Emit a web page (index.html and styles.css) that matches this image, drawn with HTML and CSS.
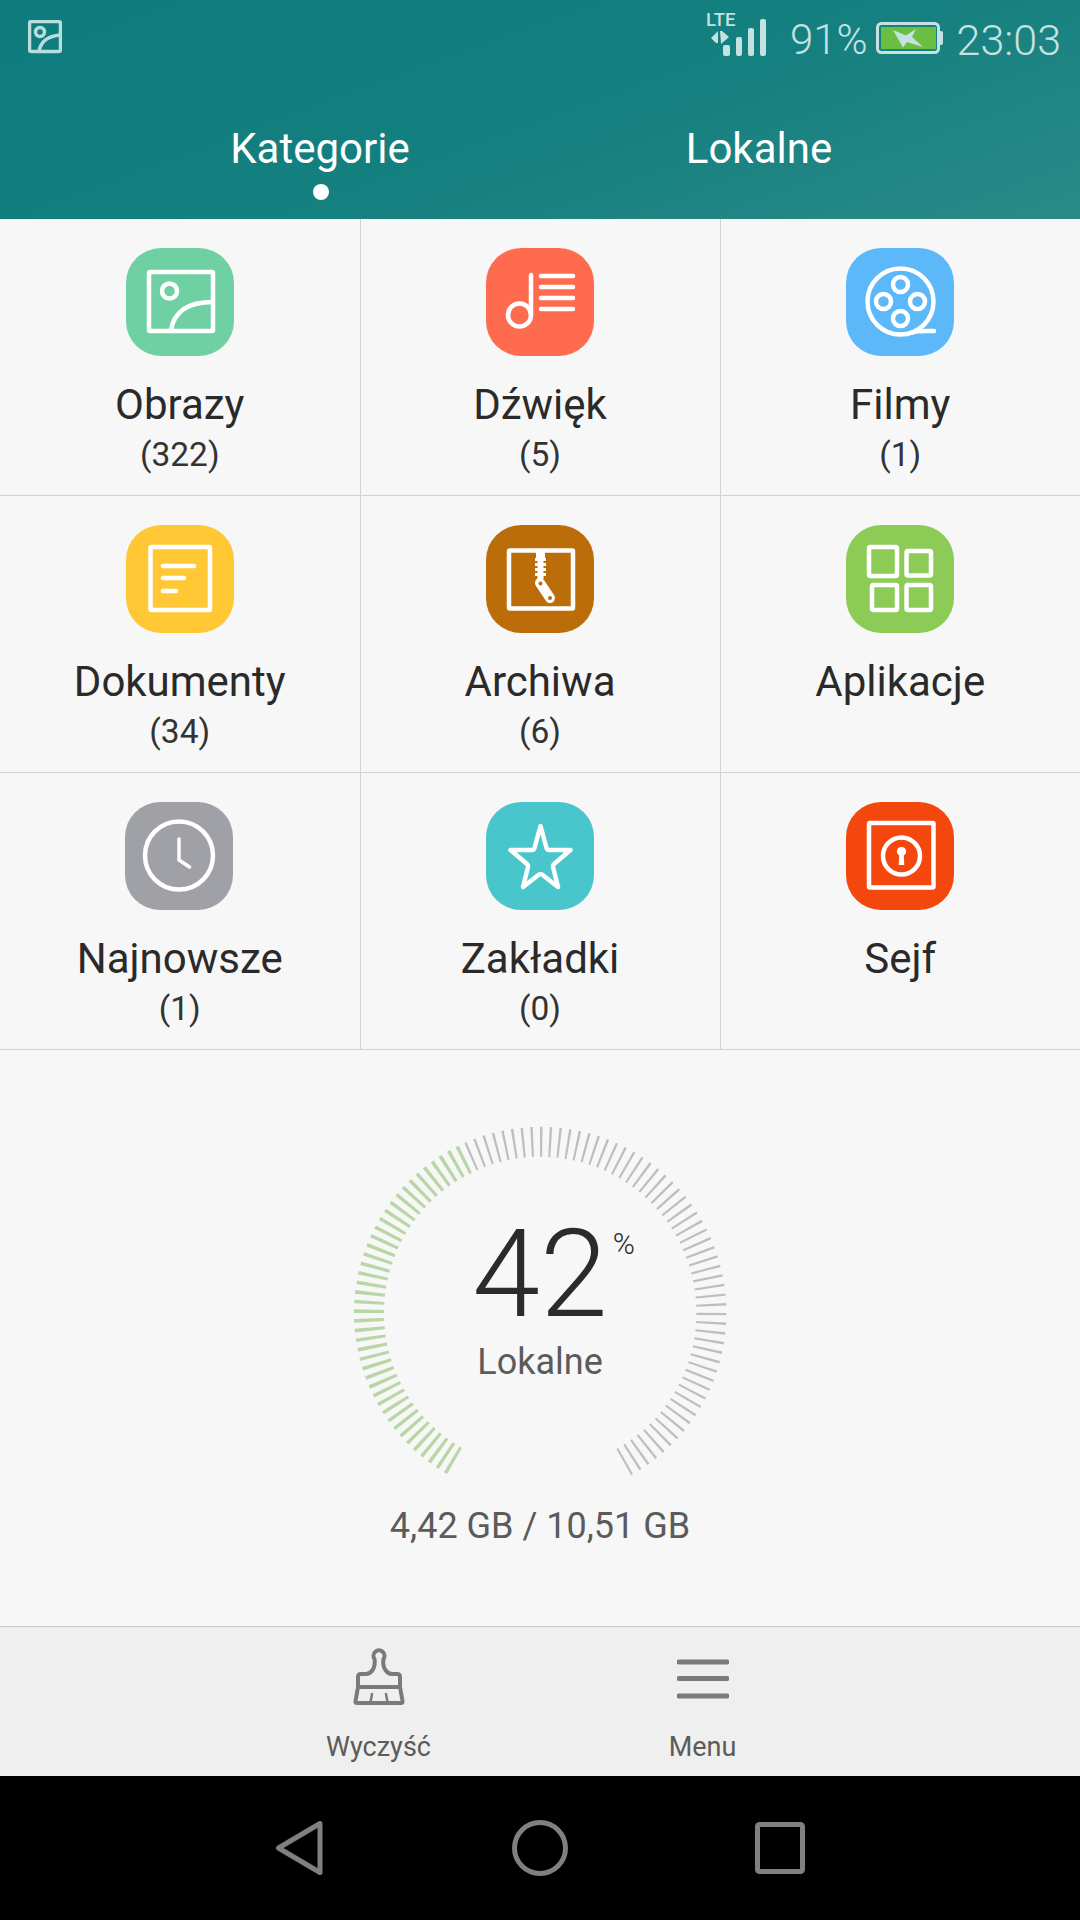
FILE: index.html
```html
<!DOCTYPE html>
<html lang="pl">
<head>
  <meta charset="UTF-8" />
  <meta name="viewport" content="width=device-width, initial-scale=1.0"/>
  <title>Pliki</title>
  <link rel="stylesheet" href="styles.css">
</head>
<body>

  <header class="top">
    <div class="status">
      <svg class="status-pic" width="34" height="34" viewBox="0 0 34 34">
        <rect x="1.5" y="1.5" width="31" height="30" rx="2"/>
        <circle cx="12" cy="12" r="4.5"/>
        <path d="M11 31 C13 21 20 16 32 15"/>
      </svg>
      <div class="status-right">
        <div class="net">
          <span class="lte">LTE</span>
          <svg width="60" height="44" viewBox="0 0 60 44">
            <path class="arrows" d="M5 26 L12 19 V31 H10 Z M14 19 H16 L23 25 L15 32 Z"/>
            <rect x="17" y="33" width="7" height="11" rx="2"/>
            <rect x="30" y="25" width="6" height="19" rx="2"/>
            <rect x="42" y="16" width="6" height="28" rx="2"/>
            <rect x="54" y="7" width="6" height="37" rx="2"/>
          </svg>
        </div>
        <span class="pct">91%</span>
        <svg class="batt" width="67" height="32" viewBox="0 0 67 32">
          <rect class="batt-fill" x="5" y="5" width="55" height="22"/>
          <rect class="batt-box" x="1.5" y="1.5" width="61" height="29" rx="4"/>
          <path class="batt-nub" d="M63 9 h2 a2 2 0 0 1 2 2 v10 a2 2 0 0 1 -2 2 h-2 Z"/>
          <path class="batt-bolt" d="M17 8 L30 13.5 L40 7 L36 15 L47 25 L31 20 L27 25.5 Z"/>
        </svg>
        <span class="clock">23:03</span>
      </div>
    </div>
    <nav class="tabs">
      <div class="tab on">Kategorie</div>
      <div class="tab">Lokalne</div>
    </nav>
  </header>

  <section class="grid">
    <div class="cell">
      <div class="tile c-images">
        <svg viewBox="0 0 108 108">
          <rect x="23" y="24" width="64" height="59" rx="1"/>
          <circle cx="43.5" cy="43" r="7.5"/>
          <path d="M45 82 C48 64 62 54 87 54"/>
        </svg>
      </div>
      <div class="name">Obrazy</div>
      <div class="count">(322)</div>
    </div>
    <div class="cell">
      <div class="tile c-audio">
        <svg viewBox="0 0 108 108">
          <circle cx="33.5" cy="67" r="11.5"/>
          <path d="M45 67 V27 M55 28 H87 M55 39 H87 M55 50 H87 M55 61 H87"/>
        </svg>
      </div>
      <div class="name">Dźwięk</div>
      <div class="count">(5)</div>
    </div>
    <div class="cell">
      <div class="tile c-video">
        <svg viewBox="0 0 108 108">
          <circle cx="54.5" cy="53.5" r="33"/>
          <circle cx="54.5" cy="36.5" r="7.5"/>
          <circle cx="54.5" cy="70.5" r="7.5"/>
          <circle cx="37.5" cy="53.5" r="7.5"/>
          <circle cx="71.5" cy="53.5" r="7.5"/>
          <path d="M66 84.5 C72 82.5 78 83 88 83"/>
        </svg>
      </div>
      <div class="name">Filmy</div>
      <div class="count">(1)</div>
    </div>

    <div class="cell">
      <div class="tile c-docs">
        <svg viewBox="0 0 108 108">
          <rect x="24.5" y="22" width="59.5" height="63" rx="1"/>
          <path d="M37 41 H68 M37 53 H58 M37 66 H50"/>
        </svg>
      </div>
      <div class="name">Dokumenty</div>
      <div class="count">(34)</div>
    </div>
    <div class="cell">
      <div class="tile c-zip">
        <svg viewBox="0 0 108 108">
          <rect x="23" y="25.5" width="64" height="58" rx="1"/>
          <path class="solid" d="M50 25 H59 V33 H60 V36 H57.5 V38 H60 V41 H57.5 V43 H60 V46 H57.5 V48 H60 V51 H57.5 V54 H51.5 V51 H49 V48 H51.5 V46 H49 V43 H51.5 V41 H49 V38 H51.5 V36 H49 V33 H50 Z"/>
          <path class="puller" d="M54 58 L64 73"/>
          <circle class="hole" cx="54.5" cy="58.5" r="2"/>
          <circle class="hole" cx="64" cy="73" r="2"/>
        </svg>
      </div>
      <div class="name">Archiwa</div>
      <div class="count">(6)</div>
    </div>
    <div class="cell">
      <div class="tile c-apps">
        <svg viewBox="0 0 108 108">
          <rect x="23" y="22" width="28" height="29" rx="1.5"/>
          <rect x="60.5" y="26" width="24.5" height="24.5" rx="1.5"/>
          <rect x="26" y="60" width="25" height="25" rx="1.5"/>
          <rect x="60.5" y="60" width="24.5" height="25" rx="1.5"/>
        </svg>
      </div>
      <div class="name">Aplikacje</div>
    </div>

    <div class="cell">
      <div class="tile c-recent">
        <svg viewBox="0 0 108 108">
          <circle cx="54" cy="53.5" r="34"/>
          <path class="thin" d="M54 37 V58 L64.5 65"/>
        </svg>
      </div>
      <div class="name">Najnowsze</div>
      <div class="count">(1)</div>
    </div>
    <div class="cell">
      <div class="tile c-star">
        <svg viewBox="0 0 108 108">
          <path d="M54.5 24 L60.5 46 Q61 48 63 48 H84.5 L68 62 Q66.5 63.5 67 65 L72 85 L56 72.5 Q54.5 71.5 53 72.5 L37 85 L42 65 Q42.5 63.5 41 62 L24.5 48 H46 Q48 48 48.5 46 Z"/>
        </svg>
      </div>
      <div class="name">Zakładki</div>
      <div class="count">(0)</div>
    </div>
    <div class="cell">
      <div class="tile c-safe">
        <svg viewBox="0 0 108 108">
          <rect x="23" y="21" width="64.5" height="64.5" rx="1"/>
          <circle cx="55.5" cy="54" r="18.5"/>
          <path class="solid" d="M55.5 45 A4.5 4.5 0 0 1 57.8 53.4 L58.3 63 H52.7 L53.2 53.4 A4.5 4.5 0 0 1 55.5 45 Z"/>
        </svg>
      </div>
      <div class="name">Sejf</div>
    </div>
  </section>

  <section class="storage">
    <div class="gauge">
      <svg class="ticks" width="380" height="380" viewBox="0 0 380 380">
        <path class="used" pathLength="124.7" d="M104.5 338.09 A171 171 0 0 1 116.92 35.4"/>
        <path class="free" pathLength="174.7" d="M120.45 33.78 A171 171 0 0 1 273.8 339.1"/>
      </svg>
      <div class="gauge-text">
        <div class="big">42<span class="sign">%</span></div>
        <div class="where">Lokalne</div>
      </div>
    </div>
    <div class="size">4,42 GB / 10,51 GB</div>
  </section>

  <footer class="tools">
    <div class="tool">
      <svg width="52" height="60" viewBox="0 0 52 60">
        <path d="M5 40 V30 Q5 27 8 27 H13 C18 27 23 21 21.5 12 A5.5 5.5 0 1 1 30.5 12 C29 21 34 27 39 27 H44 Q47 27 47 30 V40"/>
        <path d="M5 40 H47 L49.5 54 Q50 56 48 56 H4 Q2 56 2.5 54 Z"/>
        <path class="notch" d="M17.5 55 L19 47 M34.5 55 L33 47"/>
      </svg>
      <span>Wyczyść</span>
    </div>
    <div class="tool">
      <svg width="52" height="60" viewBox="0 0 52 60">
        <path d="M2 15 H50 M2 31.5 H50 M2 49 H50"/>
      </svg>
      <span>Menu</span>
    </div>
  </footer>

  <div class="sysnav">
    <svg width="50" height="56" viewBox="0 0 50 56">
      <path d="M3.5 28 L45 3.5 V52.5 Z"/>
    </svg>
    <svg width="56" height="56" viewBox="0 0 56 56">
      <circle cx="28" cy="28" r="25.5"/>
    </svg>
    <svg width="50" height="52" viewBox="0 0 50 52">
      <rect x="2.5" y="2.5" width="45" height="47" rx="2"/>
    </svg>
  </div>

</body>
</html>
```

FILE: styles.css
```css
* {
  box-sizing: border-box;
}

body {
  margin: 0;
  width: 1080px;
  height: 1920px;
  display: flex;
  flex-direction: column;
  background: #f7f7f7;
  font-family: Roboto, "Noto Sans", sans-serif;
  overflow: hidden;
}

/* header */
.top {
  height: 219px;
  flex: none;
  background: linear-gradient(160deg, #0e7c7d 0%, #14807f 55%, #2b8a88 100%);
}

.status {
  display: flex;
  justify-content: space-between;
  align-items: flex-start;
  height: 73px;
  padding: 20px 19px 0 28px;
}

.status svg {
  display: block;
}

.status-pic rect,
.status-pic circle,
.status-pic path {
  fill: none;
  stroke: #b9dcdc;
  stroke-width: 3.5;
}

.status-right {
  display: flex;
  align-items: flex-start;
  color: #c6e1e1;
}

.net {
  position: relative;
  width: 60px;
  height: 44px;
  margin-top: -8px;
}

.net svg {
  fill: #c6e1e1;
}

.lte {
  position: absolute;
  top: -1px;
  left: 0;
  font-size: 18.5px;
  line-height: 18px;
  font-weight: 500;
}

.pct,
.clock {
  font-size: 42px;
  line-height: 40px;
}

.pct {
  margin-left: 24px;
  font-weight: 300;
}

.batt {
  margin: 2px 0 0 8px;
}

.batt-box {
  fill: none;
  stroke: #c6e1e1;
  stroke-width: 3;
}

.batt-fill {
  fill: #6abf43;
}

.batt-nub,
.batt-bolt {
  fill: #c6e1e1;
}

.clock {
  margin-left: 14px;
  font-size: 43px;
  font-weight: 300;
}

.tabs {
  display: grid;
  grid-template-columns: 439px 439px;
  justify-content: center;
  margin-left: -1px;
  padding-top: 51px;
}

.tab {
  position: relative;
  text-align: center;
  color: #fff;
  font-size: 42px;
  line-height: 50px;
}

.tab.on::after {
  content: "";
  position: absolute;
  left: 50%;
  top: 60px;
  width: 16px;
  height: 16px;
  margin-left: -7px;
  border-radius: 50%;
  background: #fff;
}

/* categories */
.grid {
  flex: none;
  display: grid;
  grid-template-columns: 360.5px 360px 1fr;
  grid-auto-rows: 277px;
}

.cell {
  display: flex;
  flex-direction: column;
  align-items: center;
  padding-top: 29px;
  border-bottom: 1px solid #d2d2d2;
  border-right: 1px solid #d2d2d2;
}

.cell:nth-child(3n) {
  border-right: none;
}

.tile {
  width: 108px;
  height: 108px;
  border-radius: 35px;
}

.tile svg {
  display: block;
  width: 108px;
  height: 108px;
  fill: none;
  stroke: #fff;
  stroke-width: 4.5;
  stroke-linecap: round;
  stroke-linejoin: round;
}

.tile .solid {
  fill: #fff;
  stroke: none;
}

.tile .thin {
  stroke-width: 3.5;
}

.tile .puller {
  stroke-width: 10;
}

.tile .hole {
  fill: #bb6d0a;
  stroke: none;
}

.c-images { background: #6fd0a3; }
.c-audio { background: #ff6b4f; }
.c-video { background: #5cb8f8; }
.c-docs { background: #ffc733; }
.c-zip { background: #bb6d0a; }
.c-apps { background: #8bcb56; }
.c-recent { background: #a0a1a6; margin-left: -1px; }
.c-star { background: #48c6cc; }
.c-safe { background: #f4470d; }

.name {
  margin-top: 26px;
  font-size: 42px;
  line-height: 46px;
  color: #2a2a2a;
}

.count {
  margin-top: 8px;
  font-size: 33.5px;
  line-height: 38px;
  color: #333;
}

/* storage gauge */
.storage {
  flex: 1;
  display: flex;
  flex-direction: column;
  align-items: center;
  padding-top: 73px;
}

.gauge {
  position: relative;
  width: 380px;
  height: 380px;
}

.ticks path {
  fill: none;
  stroke-width: 30;
}

.used {
  stroke: #b8d6a6;
  stroke-dasharray: 1.1 1.9;
}

.free {
  stroke: #bebebe;
  stroke-dasharray: 0.75 2.25;
}

.gauge-text {
  position: absolute;
  top: 97px;
  left: 0;
  right: 0;
  text-align: center;
}

.big {
  position: relative;
  display: inline-block;
  font-size: 122px;
  font-weight: 300;
  line-height: 110px;
  color: #2b2b2b;
}

.sign {
  position: absolute;
  left: 100%;
  top: 6px;
  margin-left: 5px;
  font-size: 30px;
  line-height: 36px;
}

.where {
  margin-top: 12px;
  font-size: 36px;
  line-height: 40px;
  color: #5b5b5b;
}

.size {
  margin-top: 3px;
  font-size: 36px;
  line-height: 40px;
  color: #5b5b5b;
}

/* bottom toolbar */
.tools {
  flex: none;
  height: 150px;
  display: flex;
  justify-content: center;
  padding-top: 20px;
  background: #efefef;
  border-top: 1px solid #c8c8c8;
}

.tool {
  width: 323px;
  display: flex;
  flex-direction: column;
  align-items: center;
  font-size: 27px;
  line-height: 32px;
  color: #5b5b5b;
}

.tool svg {
  display: block;
  fill: none;
  stroke: #7a7a7a;
  stroke-width: 4;
  stroke-linecap: round;
  stroke-linejoin: round;
  margin-bottom: 24px;
}

.tool .notch {
  stroke-width: 2.5;
}

.tool:last-child {
  padding-left: 2px;
}

.tool:last-child svg {
  stroke-width: 5;
}

/* android navigation */
.sysnav {
  flex: none;
  height: 144px;
  display: grid;
  grid-template-columns: 56px 56px 56px;
  justify-content: center;
  justify-items: center;
  align-items: center;
  column-gap: 184px;
  background: #000;
}

.sysnav svg {
  display: block;
  fill: none;
  stroke: #808080;
  stroke-width: 5;
  stroke-linejoin: round;
}
```
